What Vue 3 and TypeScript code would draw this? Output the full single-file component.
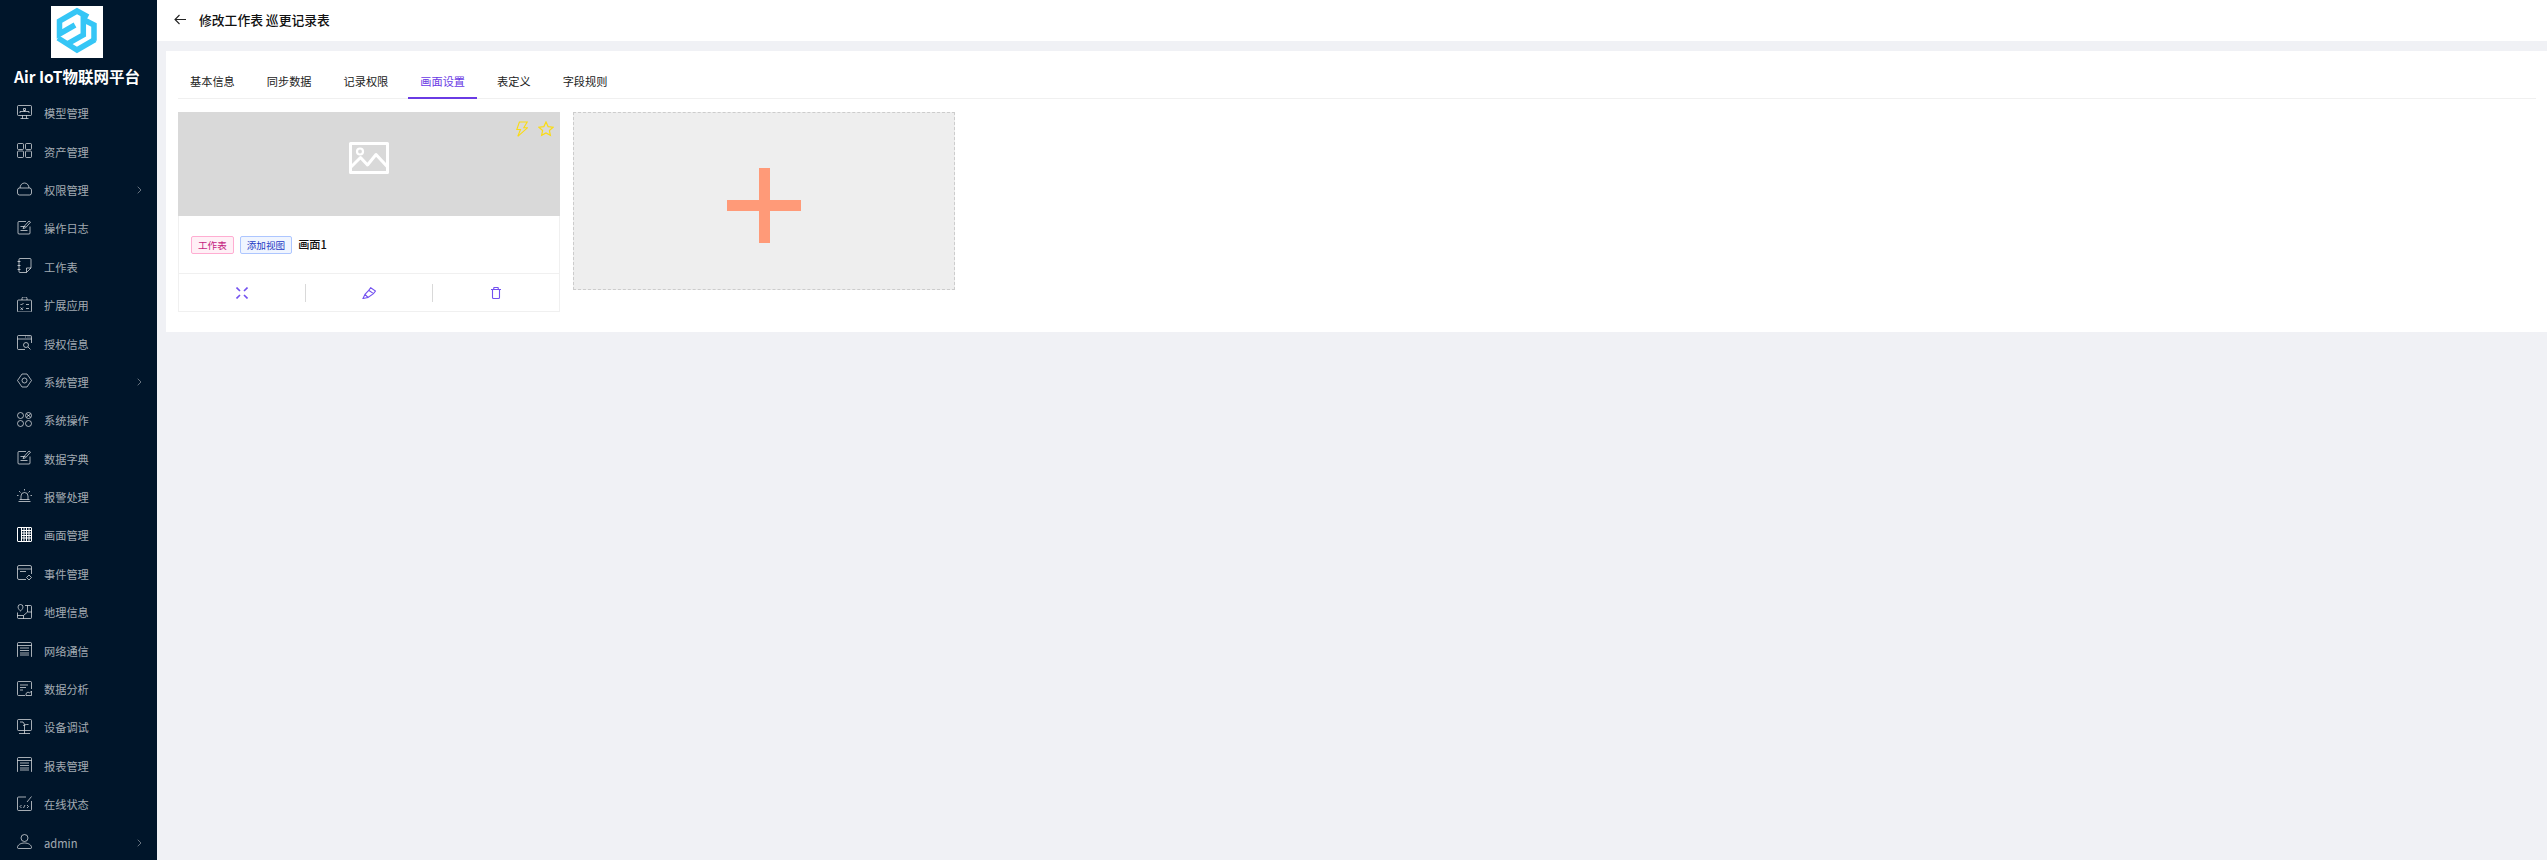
<script setup lang="ts">
interface MenuItem { label: string; icon: string; arrow?: boolean; active?: boolean }

const note = 'M13 6.5V13a1 1 0 0 1-1 1H2a1 1 0 0 1-1-1V2.5a1 1 0 0 1 1-1h7M3.5 6.5h5M3.5 10.5h7M6 8.5l1-2 5-5.5 1.5 1.2-5 5.6z'
const list = 'M1.5.5h12a1 1 0 0 1 1 1v13a1 1 0 0 1-1 1h-12a1 1 0 0 1-1-1v-13a1 1 0 0 1 1-1zM.5 3.5h14M3 6h9M3 8.5h9M3 11h9M3 13h9'

const menu: MenuItem[] = [
  { label: '模型管理', icon: 'M1.5.5h12a1 1 0 0 1 1 1v8a1 1 0 0 1-1 1h-12a1 1 0 0 1-1-1v-8a1 1 0 0 1 1-1zM5.5 10.5v3M9.5 10.5v3M3.5 13.5h8M6.5 3.5h2v2h-2zM7.5 5.5v1M3 8V6.5h9V8' },
  { label: '资产管理', icon: 'M1.5.5h4a1 1 0 0 1 1 1v4a1 1 0 0 1-1 1h-4a1 1 0 0 1-1-1v-4a1 1 0 0 1 1-1zM9.5.5h4a1 1 0 0 1 1 1v4a1 1 0 0 1-1 1h-4a1 1 0 0 1-1-1v-4a1 1 0 0 1 1-1zM1.5 8h4a1 1 0 0 1 1 1v4.500a1 1 0 0 1-1 1h-4a1 1 0 0 1-1-1V9a1 1 0 0 1 1-1zM9.500 8h4a1 1 0 0 1 1 1v4.500a1 1 0 0 1-1 1h-4a1 1 0 0 1-1-1V9a1 1 0 0 1 1-1z' },
  { label: '权限管理', icon: 'M3 7a4.500 5 0 0 1 9 0M2.500 7h10a2 2 0 0 1 2 2v3a2 2 0 0 1-2 2h-10a2 2 0 0 1-2-2V9a2 2 0 0 1 2-2z', arrow: true },
  { label: '操作日志', icon: note },
  { label: '工作表', icon: 'M3 .5h10a1 1 0 0 1 1 1V10l-4.500 4.500H3a1 1 0 0 1-1-1v-12a1 1 0 0 1 1-1zM14 10h-4.500v4.500M.5 3.500h3M.5 7.500h3M.5 11.500h3' },
  { label: '扩展应用', icon: 'M1.500 3h12a1 1 0 0 1 1 1v10a1 1 0 0 1-1 1h-12a1 1 0 0 1-1-1V4a1 1 0 0 1 1-1zM5 3V1.500A1.500 1.500 0 0 1 6.500 0h2A1.500 1.500 0 0 1 10 1.500V3M3.500 7l1 1 2-2M9 7.500h3M3.500 10.500l2.500 2.500M6 10.500L3.500 13M9 11.500h3' },
  { label: '授权信息', icon: 'M8 14.500H1.500a1 1 0 0 1-1-1v-12a1 1 0 0 1 1-1h12a1 1 0 0 1 1 1V8M.5 4h14M8 2h1M10.500 2h1M12.500 2h1M9 7.500a2.500 2.500 0 1 0 0 5 2.500 2.500 0 0 0 0-5zM11 12l2.500 2.500' },
  { label: '系统管理', icon: 'M5 1h5l4.500 6.500L10 14H5L.5 7.500zM7.500 5a2.500 2.500 0 1 0 0 5 2.500 2.500 0 0 0 0-5z', arrow: true },
  { label: '系统操作', icon: 'M3.500.5a3 3 0 1 0 0 6 3 3 0 0 0 0-6zM11.500.5a3 3 0 1 0 0 6 3 3 0 0 0 0-6zM9.500 2l4 3M9.500 5l4-3M3.500 8.500a3 3 0 1 0 0 6 3 3 0 0 0 0-6zM11.500 8.500a3 3 0 1 0 0 6 3 3 0 0 0 0-6z' },
  { label: '数据字典', icon: note },
  { label: '报警处理', icon: 'M4 10.500V7a3.500 3.500 0 0 1 7 0v3.500M1.500 12.500h12M2.500 10.500h10M7.500 0v1.500M2 2l1.500 1.500M13 2l-1.500 1.500M0 6.500h1.500M13.500 6.500H15' },
  { label: '画面管理', icon: 'M1 .5h13a.5.5 0 0 1 .5.5v13a.5.5 0 0 1-.5.5H1a.5.5 0 0 1-.5-.5V1A.5.5 0 0 1 1 .5zM4.500 1v13M7 1v13M9.500 1v13M12 1v13M4.500 3.500H14M4.500 6H14M4.500 8.500H14M4.500 11H14', active: true },
  { label: '事件管理', icon: 'M9 14.500H2a1.500 1.500 0 0 1-1.500-1.500V2A1.500 1.500 0 0 1 2 .5h11A1.500 1.500 0 0 1 14.500 2v7M.5 4h14M3 6.500h6M12 10l2.500 2.500-2.500 2.500-2.500-2.500z' },
  { label: '地理信息', icon: 'M3.500.5A2.500 2.500 0 0 0 1 3c0 2 2.500 4 2.500 4S6 5 6 3A2.500 2.500 0 0 0 3.500.5zM8 1.500h5.500a1 1 0 0 1 1 1v11a1 1 0 0 1-1 1h-12a1 1 0 0 1-1-1V8.500M.5 11.500h6l4-3.500h4M6.500 11.500v3M10.500 8V1.500' },
  { label: '网络通信', icon: list },
  { label: '数据分析', icon: 'M8 14.500H1.500a1 1 0 0 1-1-1v-12a1 1 0 0 1 1-1h12a1 1 0 0 1 1 1V8M3 4h8M3 6.500h6M3 9h3M9 14.500v-2l2-1.500 1.500 1 2-2v4.500z' },
  { label: '设备调试', icon: 'M1.500.5h12a1 1 0 0 1 1 1v9a1 1 0 0 1-1 1h-12a1 1 0 0 1-1-1v-9a1 1 0 0 1 1-1zM7.500 11.500v3M2 14.500h11M3 3h3l2 3M6 6.500c1.500 0 2-1 3.500-1h2M7.500 6v5' },
  { label: '报表管理', icon: list },
  { label: '在线状态', icon: 'M9 1H1.500a1 1 0 0 0-1 1v11.500a1 1 0 0 0 1 1h12a1 1 0 0 0 1-1V5M10 6l4.500-5.500M4.500 9l-1.500 1.500 1.500 1.500M10 9l1.500 1.500L10 12M6.500 12l1.500-3' },
  { label: 'admin', icon: 'M7.500.5a3.500 3.500 0 1 0 0 7 3.500 3.500 0 0 0 0-7zM1.500 14.500h12a1 1 0 0 0 1-1c0-2.500-3-4.500-7-4.500s-7 2-7 4.500a1 1 0 0 0 1 1z', arrow: true },
]

const tabs: string[] = ['基本信息', '同步数据', '记录权限', '画面设置', '表定义', '字段规则']
const activeTab = '画面设置'
</script>

<template>
  <div class="page">
    <aside class="sidebar">
      <div class="logo">
        <svg viewBox="0 0 52 52" width="52" height="52">
          <g fill="none" stroke="#35c6f6" stroke-width="5.500">
            <path d="M37 11L26 5 8.500 15V28L24 19" />
            <path d="M17.300 37.300L32.300 29V13.500L43 19V34.700" />
            <path d="M7 32L26 44 44 33.500" />
          </g>
        </svg>
      </div>
      <div class="brand">Air IoT物联网平台</div>
      <nav class="menu">
        <div v-for="item in menu" :key="item.label" class="menu-item" :class="{ active: item.active }">
          <svg class="menu-icon" viewBox="0 0 15 15" width="15" height="15">
            <path :d="item.icon" fill="none" stroke="currentColor" stroke-width="1" />
          </svg>
          <span class="menu-label">{{ item.label }}</span>
          <svg v-if="item.arrow" class="chevron" viewBox="0 0 5 8" width="5" height="8">
            <path d="M.7.7L4 4 .7 7.300" fill="none" stroke="currentColor" stroke-width="1" />
          </svg>
        </div>
      </nav>
    </aside>

    <main class="main">
      <header class="topbar">
        <svg class="back" viewBox="0 0 12 11" width="12" height="11">
          <path d="M12 5.500H1M5.500 1L1 5.500 5.500 10" fill="none" stroke="#222" stroke-width="1.100" />
        </svg>
        <span class="title">修改工作表 巡更记录表</span>
      </header>

      <section class="panel">
        <div class="tabs">
          <div v-for="tab in tabs" :key="tab" class="tab" :class="{ current: tab === activeTab }">{{ tab }}</div>
        </div>

        <div class="cards">
          <article class="card">
            <div class="cover">
              <svg class="cover-image" viewBox="0 0 40 32" width="40" height="32">
                <path d="M1.500 1.500h37v29h-37zM2 25l9.500-9.500 7 7.500 8.500-10.500 12 13" fill="none" stroke="#fff" stroke-width="3" stroke-linejoin="round" />
                <circle cx="11" cy="9.500" r="3" fill="none" stroke="#fff" stroke-width="2.200" />
              </svg>
              <div class="cover-marks">
                <svg viewBox="0 0 12 16" width="12" height="16">
                  <path d="M3.400 1h7.800L7.800 6.800h3.600L1.800 15.300l2.700-6.800H.8z" fill="none" stroke="#fadb14" stroke-width="1.100" />
                </svg>
                <svg viewBox="0 0 16 16" width="16" height="16">
                  <path d="M8 1l2.100 4.600 5 .6-3.700 3.300 1 4.900L8 12l-4.400 2.400 1-4.900L.9 6.200l5-.6z" fill="none" stroke="#fadb14" stroke-width="1.200" />
                </svg>
              </div>
            </div>
            <div class="card-body">
              <span class="tag magenta">工作表</span>
              <span class="tag geek">添加视图</span>
              <span class="card-name">画面1</span>
            </div>
            <div class="actions">
              <div class="action">
                <svg viewBox="0 0 12 12" width="12" height="12">
                  <path d="M.5.5l3.500 3.500M11.500.5L8 4M.5 11.500L4 8M11.500 11.500L8 8" fill="none" stroke="#7351f0" stroke-width="1.600" />
                </svg>
              </div>
              <div class="action">
                <svg viewBox="0 0 14 12" width="14" height="12">
                  <path d="M8.700.7l4.800 3.300-2 2.600-4.800-3.300zM6.700 3.300L3 7.300 1 11.500l5-1 5.500-3.900M3 7.300l3 3.200" fill="none" stroke="#7351f0" stroke-width="1.100" />
                </svg>
              </div>
              <div class="action">
                <svg viewBox="0 0 10 12" width="10" height="12">
                  <path d="M1.500 2.500v8a1 1 0 0 0 1 1h5a1 1 0 0 0 1-1v-8M0 2.500h10M2.500 2.500L3 .5h4l.5 2" fill="none" stroke="#7351f0" stroke-width="1.100" />
                </svg>
              </div>
            </div>
          </article>

          <div class="add-card">
            <span class="plus" />
          </div>
        </div>
      </section>
    </main>
  </div>
</template>

<style scoped>
.page {
  display: flex;
  width: 2547px;
  height: 860px;
  overflow: hidden;
  background: #f0f1f5;
  font-family: "Noto Sans CJK SC", "Noto Sans", sans-serif;
}
.sidebar {
  width: 157px;
  flex: none;
  background: #00152a;
  display: flex;
  flex-direction: column;
  align-items: stretch;
}
.logo {
  width: 52px;
  height: 52px;
  margin: 6px 0 0 51px;
  background: #fff;
}
.logo svg { display: block; }
.brand {
  height: 37px;
  line-height: 36px;
  width: 154px;
  text-align: center;
  font-size: 15.500px;
  font-weight: 600;
  color: #fff;
  white-space: nowrap;
}
.menu { display: flex; flex-direction: column; }
.menu-item {
  height: 38.4px;
  display: flex;
  align-items: center;
  padding: 0 15px 0 17px;
  color: rgba(255, 255, 255, 0.65);
}
.menu-item.active .menu-icon { color: #fff; }
.menu-icon { flex: none; margin-top: -2px; }
.menu-label {
  margin-left: 12px;
  font-size: 11.2px;
  line-height: 16px;
  flex: 1;
}
.chevron { flex: none; color: rgba(255, 255, 255, 0.4); }
.main {
  flex: 1;
  min-width: 0;
  display: flex;
  flex-direction: column;
}
.topbar {
  height: 41px;
  flex: none;
  background: #fff;
  display: flex;
  align-items: center;
  padding-left: 17px;
}
.back { flex: none; margin-top: -3px; }
.title {
  margin-left: 13px;
  margin-top: -3px;
  font-size: 12.8px;
  font-weight: 500;
  color: #111;
  white-space: pre;
}
.panel {
  margin: 10px 0 0 9px;
  height: 281px;
  background: #fff;
  padding: 0 11px 0 12px;
}
.tabs {
  display: flex;
  gap: 8px;
  height: 48px;
  border-bottom: 1.500px solid #f0f0f0;
  box-sizing: border-box;
  padding-top: 12px;
}
.tab {
  padding: 0 12px;
  height: 36px;
  box-sizing: border-box;
  line-height: 36px;
  font-size: 11.2px;
  color: #222;
  white-space: nowrap;
}
.tab.current {
  color: #6a3be4;
  border-bottom: 2px solid #6a3be4;
}
.cards {
  display: flex;
  align-items: flex-start;
  gap: 13px;
  margin-top: 13px;
}
.card {
  width: 382px;
  height: 200px;
  box-sizing: border-box;
  border: 1px solid #f0f0f0;
  border-top: none;
  display: flex;
  flex-direction: column;
  background: #fff;
}
.cover {
  position: relative;
  height: 104px;
  margin: 0 -1px;
  flex: none;
  box-sizing: border-box;
  padding-bottom: 12px;
  background: #d9d9d9;
  display: flex;
  align-items: center;
  justify-content: center;
}
.cover-image { display: block; }
.cover-marks {
  position: absolute;
  top: 9px;
  right: 6px;
  display: flex;
  gap: 10px;
}
.card-body {
  height: 58px;
  flex: none;
  display: flex;
  align-items: center;
  padding-left: 12px;
  border-bottom: 1px solid #f0f0f0;
  box-sizing: border-box;
}
.tag {
  height: 18px;
  box-sizing: border-box;
  line-height: 16px;
  padding: 0 6px;
  font-size: 9.600px;
  border: 1px solid;
  border-radius: 2px;
  margin-right: 6px;
  white-space: nowrap;
}
.tag.magenta { color: #c41d7f; background: #fff0f6; border-color: #ffadd2; }
.tag.geek { color: #1d39c4; background: #f0f5ff; border-color: #adc6ff; }
.card-name {
  font-size: 11.200px;
  font-weight: 500;
  color: #111;
  margin-top: -2px;
}
.actions {
  flex: 1;
  display: flex;
  align-items: center;
}
.action {
  flex: 1;
  height: 18px;
  display: flex;
  align-items: center;
  justify-content: center;
  border-right: 1px solid #d9d9d9;
}
.action:last-child { border-right: none; }
.action svg { display: block; }
.add-card {
  width: 382px;
  height: 178px;
  box-sizing: border-box;
  background: #eee;
  border: 1px dashed #ccc;
  display: flex;
  align-items: center;
  justify-content: center;
}
.plus {
  display: block;
  width: 74px;
  height: 75px;
  margin-top: 9px;
  background:
    linear-gradient(#ff9a78, #ff9a78) center / 11px 100% no-repeat,
    linear-gradient(#ff9a78, #ff9a78) center / 100% 11px no-repeat;
}
</style>

<style>
html, body { margin: 0; padding: 0; }
</style>
